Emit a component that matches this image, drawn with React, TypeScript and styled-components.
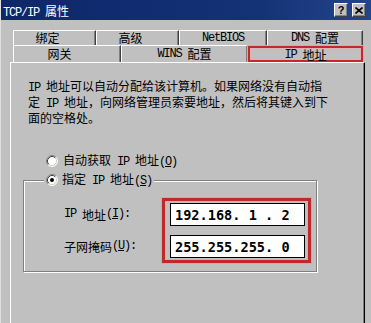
import React from 'react';
import styled, { createGlobalStyle, css } from 'styled-components';

const Global = createGlobalStyle`
  html, body { margin: 0; padding: 0; background: #c0c0c0; overflow: hidden; }
  body {
    font-family: "Noto Sans CJK SC", "Liberation Sans", sans-serif;
    font-size: 12px;
    color: #000;
  }
`;

const Window = styled.div`
  width: 371px;
  height: 323px;
  background: #c0c0c0;
  display: flex;
  flex-direction: column;
  overflow: hidden;
  box-sizing: border-box;
  border-left: 1px solid #e0e0e0;
`;

const TitleBar = styled.div`
  height: 20px;
  flex: none;
  display: flex;
  align-items: center;
  justify-content: space-between;
  padding: 0 5px 0 2px;
  background: linear-gradient(90deg, #0e266a 0%, #143276 70%, #24458c 100%);
  color: #fff;
`;

const Title = styled.div`
  font-size: 12px;
  line-height: 12px;
  padding-top: 3px;
  white-space: pre;
`;

const TitleButtons = styled.div`
  display: flex;
  gap: 4px;
`;

const TitleButton = styled.div`
  width: 14px;
  height: 14px;
  box-sizing: border-box;
  background: #c0c0c0;
  border: 1px solid;
  border-color: #fff #404040 #404040 #fff;
  box-shadow: inset -1px -1px #808080;
  display: flex;
  align-items: center;
  justify-content: center;
  color: #000;
  font-family: "Liberation Sans", sans-serif;
  font-weight: bold;
  font-size: 11px;
  line-height: 11px;
`;

const Latin = styled.span`
  font-family: "Liberation Mono", monospace;
  letter-spacing: -1.2px;
  white-space: pre;
`;

const TabStrip = styled.div`
  margin: 10px 0 0 12px;
  width: 350px;
  flex: none;
  display: flex;
  flex-direction: column;
`;

const TabRow = styled.div<{ $h: number }>`
  display: flex;
  height: ${p => p.$h}px;
`;

const Tab = styled.div<{ $w: number; $shift?: number; $active?: boolean }>`
  width: ${p => p.$w}px;
  box-sizing: border-box;
  display: flex;
  align-items: center;
  justify-content: center;
  padding-right: ${p => p.$shift || 0}px;
  border-top: 1px solid #fff;
  border-left: 1px solid #fff;
  border-right: 1px solid #404040;
  box-shadow: inset -1px 0 #808080;
  line-height: 12px;
  font-size: 12px;
  white-space: pre;
  ${p =>
    p.$active &&
    css`
      margin-top: 1px;
      border: 2px solid #c4282a;
      box-shadow: 0 0 0 1px #e4a4a4, inset 0 0 0 1px #e0b0b0;
      padding-top: 1px;
    `}
`;

const Panel = styled.div`
  flex: 1;
  margin-left: 9px;
  width: 355px;
  box-sizing: border-box;
  border-left: 1px solid #fff;
  border-top: 1px solid #fff;
  border-right: 1px solid #000;
  box-shadow: inset -1px 0 #808080;
  padding-top: 16px;
  display: flex;
  flex-direction: column;
  align-items: flex-start;
`;

const Description = styled.p`
  margin: 0 0 0 17px;
  line-height: 13px;
  font-size: 12px;
  white-space: nowrap;
`;

const RadioRow = styled.div`
  margin: 29px 0 0 35px;
  height: 16px;
  display: flex;
  align-items: center;
  gap: 5px;
  line-height: 13px;
  white-space: pre;
`;

const GroupBox = styled.fieldset`
  margin: 3px 0 0 12px;
  width: 294px;
  box-sizing: border-box;
  border: 1px solid #808080;
  box-shadow: inset 1px 1px #fff, 1px 1px #fff;
  padding: 0 0 8px 0;
  min-inline-size: 0;
`;

const Legend = styled.legend`
  margin-left: 20px;
  padding: 0 2px;
  height: 16px;
  display: flex;
  align-items: center;
  gap: 4px;
  background: #c0c0c0;
  line-height: 13px;
  white-space: pre;
`;

const FormArea = styled.div`
  display: flex;
  margin-top: 10px;
  padding-left: 40px;
`;

const LabelColumn = styled.div`
  width: 98px;
  padding-top: 5px;
  display: flex;
  flex-direction: column;
  gap: 9px;
`;

const FieldLabel = styled.div`
  height: 23px;
  display: flex;
  align-items: center;
  line-height: 13px;
  white-space: pre;
`;

const HighlightBox = styled.div`
  border: 3px solid #c0282a;
  box-shadow: 0 0 0 1px #e4a0a0, inset 0 0 0 1px #e2a8a8;
  padding: 2px 3px 2px 5px;
  display: flex;
  flex-direction: column;
  gap: 9px;
`;

const AddressField = styled.div`
  width: 135px;
  height: 23px;
  box-sizing: border-box;
  background: #fff;
  border: 1px solid #000;
  padding: 1px 0 0 4px;
  display: flex;
  align-items: center;
  font-family: "DejaVu Sans Mono", monospace;
  font-weight: bold;
  font-size: 13.6px;
  white-space: pre;
`;

const Radio = ({ checked }: { checked?: boolean }) => (
  <svg width="12" height="12" viewBox="0 0 12 12" style={{ flex: 'none' }}>
    <circle cx="6" cy="6" r="5" fill="#fff" />
    <path d="M2.11 9.89 A5.5 5.5 0 0 1 9.89 2.11" fill="none" stroke="#808080" strokeWidth="1" />
    <path d="M9.89 2.11 A5.5 5.5 0 0 1 2.11 9.89" fill="none" stroke="#ffffff" strokeWidth="1" />
    <path d="M2.82 9.18 A4.5 4.5 0 0 1 9.18 2.82" fill="none" stroke="#404040" strokeWidth="1" />
    <path d="M9.18 2.82 A4.5 4.5 0 0 1 2.82 9.18" fill="none" stroke="#d4d0c8" strokeWidth="1" />
    {checked && <circle cx="6" cy="6" r="2" fill="#000" />}
  </svg>
);

const CloseGlyph = () => (
  <svg width="8" height="7" viewBox="0 0 8 7">
    <path d="M0.5 0.5 L7.5 6.5 M7.5 0.5 L0.5 6.5" stroke="#000" strokeWidth="1.6" />
  </svg>
);

export default function App() {
  return (
    <>
      <Global />
      <Window>
        <TitleBar>
          <Title>
            <Latin>TCP/IP </Latin>属性
          </Title>
          <TitleButtons>
            <TitleButton>?</TitleButton>
            <TitleButton>
              <CloseGlyph />
            </TitleButton>
          </TitleButtons>
        </TitleBar>

        <TabStrip>
          <TabRow $h={15}>
            <Tab $w={83} $shift={14}>绑定</Tab>
            <Tab $w={83} $shift={14}>高级</Tab>
            <Tab $w={88}>
              <Latin>NetBIOS</Latin>
            </Tab>
            <Tab $w={96}>
              <Latin>DNS </Latin>配置
            </Tab>
          </TabRow>
          <TabRow $h={17}>
            <Tab $w={108} $shift={15}>网关</Tab>
            <Tab $w={127}>
              <Latin>WINS </Latin>配置
            </Tab>
            <Tab $w={115} $active>
              <Latin>IP </Latin>地址
            </Tab>
          </TabRow>
        </TabStrip>

        <Panel>
          <Description>
            <Latin>IP </Latin>地址可以自动分配给该计算机。如果网络没有自动指
            <br />
            定<Latin> IP </Latin>地址，向网络管理员索要地址，然后将其键入到下
            <br />
            面的空格处。
          </Description>

          <RadioRow>
            <Radio />
            <span>
              自动获取<Latin> IP </Latin>地址<Latin>(<u>O</u>)</Latin>
            </span>
          </RadioRow>

          <GroupBox>
            <Legend>
              <Radio checked />
              <span>
                指定<Latin> IP </Latin>地址<Latin>(<u>S</u>)</Latin>
              </span>
            </Legend>
            <FormArea>
              <LabelColumn>
                <FieldLabel>
                  <Latin>IP </Latin>地址<Latin>(<u>I</u>):</Latin>
                </FieldLabel>
                <FieldLabel>
                  子网掩码<Latin>(<u>U</u>):</Latin>
                </FieldLabel>
              </LabelColumn>
              <HighlightBox>
                <AddressField>192.168. 1 . 2</AddressField>
                <AddressField>255.255.255. 0</AddressField>
              </HighlightBox>
            </FormArea>
          </GroupBox>
        </Panel>
      </Window>
    </>
  );
}
